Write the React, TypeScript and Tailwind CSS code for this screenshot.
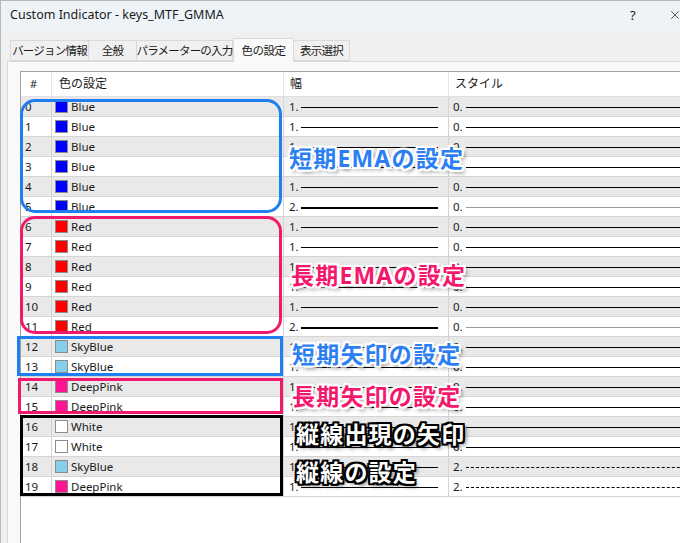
import React from 'react';
import { X } from 'lucide-react';

type Row = {
  n: number;
  name: string;
  color: string;
  w: string;
  wLine: 'thin' | 'thick';
  s: string;
  sLine: 'solid' | 'gray' | 'dash';
};

const BLUE = '#0000ff';
const RED = '#ff0000';
const SKY = '#87ceeb';
const PINK = '#ff1493';

const rows: Row[] = [
  ...[0, 1, 2, 3, 4].map((n) => ({ n, name: 'Blue', color: BLUE, w: '1.', wLine: 'thin' as const, s: '0.', sLine: 'solid' as const })),
  { n: 5, name: 'Blue', color: BLUE, w: '2.', wLine: 'thick', s: '0.', sLine: 'gray' },
  ...[6, 7, 8, 9, 10].map((n) => ({ n, name: 'Red', color: RED, w: '1.', wLine: 'thin' as const, s: '0.', sLine: 'solid' as const })),
  { n: 11, name: 'Red', color: RED, w: '2.', wLine: 'thick', s: '0.', sLine: 'gray' },
  { n: 12, name: 'SkyBlue', color: SKY, w: '1.', wLine: 'thin', s: '0.', sLine: 'solid' },
  { n: 13, name: 'SkyBlue', color: SKY, w: '1.', wLine: 'thin', s: '0.', sLine: 'solid' },
  { n: 14, name: 'DeepPink', color: PINK, w: '1.', wLine: 'thin', s: '0.', sLine: 'solid' },
  { n: 15, name: 'DeepPink', color: PINK, w: '1.', wLine: 'thin', s: '0.', sLine: 'solid' },
  { n: 16, name: 'White', color: '#ffffff', w: '1.', wLine: 'thin', s: '0.', sLine: 'solid' },
  { n: 17, name: 'White', color: '#ffffff', w: '1.', wLine: 'thin', s: '0.', sLine: 'solid' },
  { n: 18, name: 'SkyBlue', color: SKY, w: '1.', wLine: 'thin', s: '2.', sLine: 'dash' },
  { n: 19, name: 'DeepPink', color: PINK, w: '1.', wLine: 'thin', s: '2.', sLine: 'dash' },
];

const tabs = [
  { label: 'バージョン情報', w: 'w-[79px]' },
  { label: '全般', w: 'w-[48px]' },
  { label: 'パラメーターの入力', w: 'w-[96px]' },
  { label: '色の設定', w: 'w-[61px]', active: true },
  { label: '表示選択', w: 'w-[56px]' },
];

// outlined caption styles
const whiteOutline =
  '[text-shadow:-2px_-2px_0_#fff,2px_-2px_0_#fff,-2px_2px_0_#fff,2px_2px_0_#fff,0_-2px_0_#fff,0_2px_0_#fff,-2px_0_0_#fff,2px_0_0_#fff,3px_3px_4px_rgba(0,0,0,0.55)]';
const blackOutline =
  '[text-shadow:-2px_-2px_0_#000,2px_-2px_0_#000,-2px_2px_0_#000,2px_2px_0_#000,0_-2px_0_#000,0_2px_0_#000,-2px_0_0_#000,2px_0_0_#000,3px_3px_4px_rgba(0,0,0,0.6)]';

const Caption: React.FC<{ text: string; pos: string; tone: 'blue' | 'pink' | 'black' }> = ({ text, pos, tone }) => {
  const color =
    tone === 'blue'
      ? `text-[#2b7ff3] ${whiteOutline}`
      : tone === 'pink'
      ? `text-[#f5176c] ${whiteOutline}`
      : `text-white ${blackOutline}`;
  return (
    <div className={`absolute whitespace-nowrap text-[23px] leading-[24px] font-bold tracking-[1.2px] ${pos} ${color}`}>
      {text}
    </div>
  );
};

const WidthCell: React.FC<{ row: Row }> = ({ row }) => (
  <div className="flex items-center pl-[5px] border-r border-[#d4d4d4]">
    <span className="w-[11px]">{row.w}</span>
    {row.wLine === 'thick' ? (
      <div className="ml-[1px] w-[137px] h-[2px] bg-black mt-[2px]" />
    ) : (
      <div className="ml-[1px] w-[137px] h-[1px] bg-black mt-[2px]" />
    )}
  </div>
);

const StyleCell: React.FC<{ row: Row }> = ({ row }) => (
  <div className="flex items-center pl-[4px]">
    <span className="w-[13px]">{row.s}</span>
    {row.sLine === 'solid' && <div className="flex-1 h-[1px] bg-black mt-[2px]" />}
    {row.sLine === 'gray' && <div className="flex-1 h-[1px] bg-[#9a9a9a] mt-[2px]" />}
    {row.sLine === 'dash' && <div className="flex-1 border-t border-dashed border-black mt-[2px]" />}
  </div>
);

export default function App() {
  return (
    <div className="w-[680px] h-[543px] overflow-hidden bg-[#f0f0f0] text-[12px] text-[#1a1a1a] font-['Noto_Sans','Noto_Sans_CJK_JP',sans-serif] border-t border-l border-[#b8b8b8]">
      {/* title bar */}
      <div className="h-[29px] bg-[#eef3f8] flex items-center relative">
        <span className="pl-[9px] text-[12.5px] text-[#1b1b1b]">Custom Indicator - keys_MTF_GMMA</span>
        <span className="absolute left-[629px] top-[5px] text-[13px]">?</span>
        <X className="absolute left-[667px] top-[7px] text-[#222]" size={14} strokeWidth={1.3} />
      </div>

      {/* tabs */}
      <div className="flex items-end h-[31px] pl-[9px]">
        {tabs.map((t) =>
          t.active ? (
            <div
              key={t.label}
              className={`${t.w} h-[24px] -mb-[1px] relative z-10 bg-[#f9f9f9] border border-b-0 border-[#d9d9d9] flex items-center justify-center whitespace-nowrap text-[11.5px] tracking-[-0.5px]`}
            >
              {t.label}
            </div>
          ) : (
            <div
              key={t.label}
              className={`${t.w} h-[21px] bg-[#f0f0f0] border border-l-0 first:border-l border-[#d9d9d9] flex items-center justify-center whitespace-nowrap text-[11.5px] tracking-[-0.8px]`}
            >
              {t.label}
            </div>
          )
        )}
      </div>

      {/* tab panel */}
      <div className="ml-[6px] h-[500px] bg-[#f9f9f9] border-t border-l border-[#d9d9d9] pt-[9px] pl-[12px]">
        <div className="w-[700px] h-[480px] bg-white border-t border-l border-[#a0a0a0] text-[11.5px]">
          {/* header */}
          <div className="grid grid-cols-[31px_232px_165px_1fr] h-[25px] border-b border-[#e0e0e0]">
            <div className="flex items-center pl-[9px] border-r border-[#e5e5e5] text-[11px]">#</div>
            <div className="flex items-center pl-[7px] border-r border-[#e5e5e5] text-[12px]">色の設定</div>
            <div className="flex items-center pl-[6px] border-r border-[#e5e5e5] text-[12px]">幅</div>
            <div className="flex items-center pl-[6px] text-[12px]">スタイル</div>
          </div>

          {/* rows + annotations */}
          <div className="relative">
            {rows.map((r) => (
              <div
                key={r.n}
                className={`grid grid-cols-[31px_232px_165px_1fr] h-[20px] border-b border-[#d4d4d4] ${
                  r.n % 2 === 0 ? 'bg-[#e9e9e9]' : 'bg-white'
                }`}
              >
                <div className="flex items-center pl-[4px] border-r border-[#d4d4d4]">{r.n}</div>
                <div className="flex items-center pl-[3px] border-r border-[#d4d4d4]">
                  <span
                    className="w-[13px] h-[13px] border border-[#8c8c8c] shrink-0"
                    style={{ backgroundColor: r.color }}
                  />
                  <span className="ml-[3px]">{r.name}</span>
                </div>
                <WidthCell row={r} />
                <StyleCell row={r} />
              </div>
            ))}

            <div className="absolute left-[-1px] top-[2px] w-[262px] h-[114px] border-[3px] border-[#1f7ef0] rounded-[15px]" />
            <div className="absolute left-[-1px] top-[119px] w-[262px] h-[118px] border-[3px] border-[#f0196b] rounded-[15px]" />
            <div className="absolute left-[-4px] top-[239px] w-[266px] h-[40px] border-[3px] border-[#1f7ef0]" />
            <div className="absolute left-[-3px] top-[281px] w-[265px] h-[36px] border-[3px] border-[#f0196b]" />
            <div className="absolute left-[-1px] top-[318px] w-[263px] h-[81px] border-[3px] border-black" />

            <Caption text="短期EMAの設定" pos="left-[268px] top-[49px]" tone="blue" />
            <Caption text="長期EMAの設定" pos="left-[270px] top-[166px]" tone="pink" />
            <Caption text="短期矢印の設定" pos="left-[271px] top-[245px]" tone="blue" />
            <Caption text="長期矢印の設定" pos="left-[271px] top-[287px]" tone="pink" />
            <Caption text="縦線出現の矢印" pos="left-[275px] top-[325px]" tone="black" />
            <Caption text="縦線の設定" pos="left-[275px] top-[363px]" tone="black" />
          </div>
        </div>
      </div>
    </div>
  );
}
